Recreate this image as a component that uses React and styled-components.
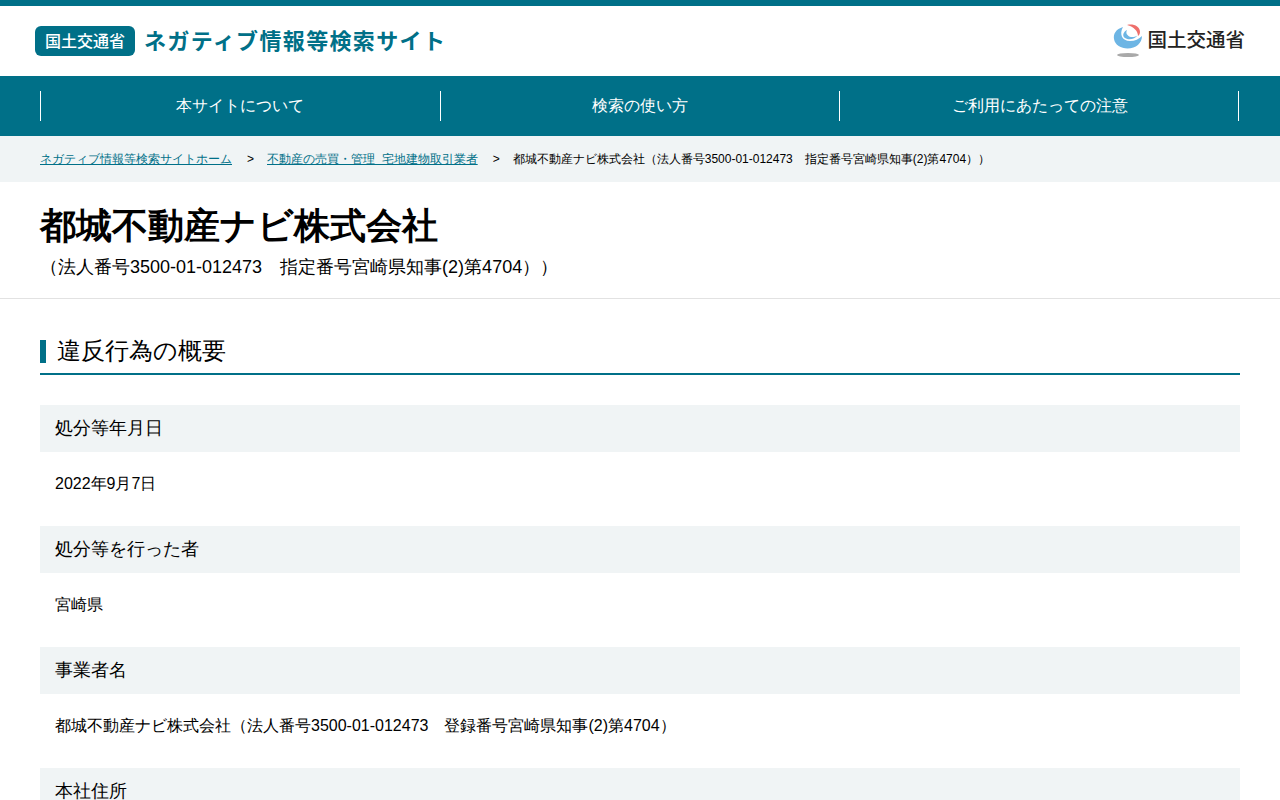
import React from "react";
import styled, { createGlobalStyle } from "styled-components";

const GlobalStyle = createGlobalStyle`
  html, body {
    margin: 0;
    padding: 0;
    background: #fff;
    color: #000;
    font-family: "Liberation Sans", sans-serif;
  }
  * {
    box-sizing: border-box;
  }
`;

const Page = styled.div`
  width: 1280px;
  height: 800px;
  overflow: hidden;
`;

const Header = styled.header`
  height: 76px;
  border-top: 6px solid #007088;
  padding: 0 35px;
  display: flex;
  align-items: center;
  justify-content: space-between;
`;

const Brand = styled.div`
  display: flex;
  align-items: center;
  gap: 9px;
`;

const Badge = styled.span`
  width: 100px;
  height: 30px;
  border-radius: 6px;
  background: #007088;
  color: #fff;
  font-family: "Noto Sans CJK JP", sans-serif;
  font-size: 16px;
  font-weight: 500;
  line-height: 29px;
  display: flex;
  justify-content: center;
`;

const SiteTitle = styled.span`
  margin-bottom: 4px;
  font-family: "Noto Sans CJK JP", sans-serif;
  font-size: 22px;
  font-weight: 700;
  line-height: 30px;
  letter-spacing: 1.35px;
  color: #007088;
`;

const MlitLogo = styled.div`
  display: flex;
  align-items: center;
  gap: 4px;
  font-family: "Noto Sans CJK JP", sans-serif;
  font-size: 19.5px;
  font-weight: 500;
  line-height: 28px;
  color: #222;
`;

const MlitName = styled.span`
  margin-bottom: 4px;
`;

const Nav = styled.nav`
  height: 60px;
  background: #007088;
  padding: 0 40px;
  display: grid;
  grid-template-columns: 400px 399px 400px;
  align-items: center;
`;

const NavItem = styled.a`
  height: 30px;
  border-left: 1px solid #fff;
  color: #fff;
  font-size: 16px;
  display: flex;
  align-items: center;
  justify-content: center;
  &:first-child {
    padding-right: 2px;
  }
  &:last-child {
    padding-left: 2px;
    border-right: 1px solid #fff;
  }
`;

const Crumbs = styled.div`
  height: 46px;
  background: #f0f4f5;
  padding: 0 40px;
  display: flex;
  align-items: center;
  font-size: 12px;
`;

const CrumbLink = styled.a`
  color: #007088;
  text-decoration: underline;
`;

const CrumbSep = styled.span`
  margin: 0 13px 0 15px;
`;

const TitleBlock = styled.div`
  padding: 21px 40px 16px;
  border-bottom: 1px solid #e2e2e2;
`;

const Title = styled.h1`
  margin: 0;
  font-size: 36px;
  line-height: 46px;
  font-weight: 700;
`;

const TitleSub = styled.div`
  margin-top: 3px;
  font-size: 18px;
  line-height: 30px;
`;

const Content = styled.main`
  padding: 30px 40px 0;
`;

const SectionHeading = styled.h2`
  margin: 0 0 30px;
  height: 46px;
  border-bottom: 2px solid #007088;
  font-size: 24px;
  font-weight: 400;
  line-height: 44px;
  display: flex;
  align-items: center;
  &::before {
    content: "";
    width: 6px;
    height: 23px;
    margin-right: 11px;
    background: #007088;
  }
`;

const Field = styled.section`
  margin-bottom: 15px;
`;

const FieldLabel = styled.h3`
  margin: 0;
  height: 47px;
  padding: 0 15px;
  background: #f0f4f5;
  font-size: 18px;
  font-weight: 400;
  line-height: 47px;
`;

const FieldValue = styled.p`
  margin: 0;
  height: 59px;
  padding: 0 15px;
  font-size: 16px;
  line-height: 63px;
`;

const fields = [
  ["処分等年月日", "2022年9月7日"],
  ["処分等を行った者", "宮崎県"],
  ["事業者名", "都城不動産ナビ株式会社（法人番号3500-01-012473　登録番号宮崎県知事(2)第4704）"],
  ["本社住所", ""],
];

const Emblem = () => (
  <svg width="30" height="34" viewBox="0 0 30 34">
    <path d="M10 3 C3 5 0 10 1 15 C2 21 8 24.5 14.5 24.5 C23 24.5 29 19 29 12 C26 15 22 17 17 17 C9 17 6 10 10 3Z" fill="#6db5e4" />
    <path d="M14 6 C10 8 9 12 12 14 C16 16.5 22 15 24.5 11.5 C21 13.5 17 13.5 15 11.5 C13 10 13 8 14 6Z" fill="#6db5e4" />
    <path d="M14 1 C20 -0.5 27 2 27 8 C27 10 26 11 25 12 C25 7 21 3 14 1Z" fill="#ee6f6b" />
    <ellipse cx="15" cy="31" rx="11" ry="2" fill="#a9a9a9" />
  </svg>
);

const App = () => {
  return (
    <Page>
      <GlobalStyle />
      <Header>
        <Brand>
          <Badge>国土交通省</Badge>
          <SiteTitle>ネガティブ情報等検索サイト</SiteTitle>
        </Brand>
        <MlitLogo>
          <Emblem />
          <MlitName>国土交通省</MlitName>
        </MlitLogo>
      </Header>
      <Nav>
        <NavItem>本サイトについて</NavItem>
        <NavItem>検索の使い方</NavItem>
        <NavItem>ご利用にあたっての注意</NavItem>
      </Nav>
      <Crumbs>
        <CrumbLink>ネガティブ情報等検索サイトホーム</CrumbLink>
        <CrumbSep>&gt;</CrumbSep>
        <CrumbLink>不動産の売買・管理&nbsp;&nbsp;宅地建物取引業者</CrumbLink>
        <CrumbSep>&gt;</CrumbSep>
        <span>都城不動産ナビ株式会社（法人番号3500-01-012473　指定番号宮崎県知事(2)第4704））</span>
      </Crumbs>
      <TitleBlock>
        <Title>都城不動産ナビ株式会社</Title>
        <TitleSub>（法人番号3500-01-012473　指定番号宮崎県知事(2)第4704））</TitleSub>
      </TitleBlock>
      <Content>
        <SectionHeading>違反行為の概要</SectionHeading>
        {fields.map(([label, value]) => (
          <Field key={label}>
            <FieldLabel>{label}</FieldLabel>
            <FieldValue>{value}</FieldValue>
          </Field>
        ))}
      </Content>
    </Page>
  );
};

export default App;
